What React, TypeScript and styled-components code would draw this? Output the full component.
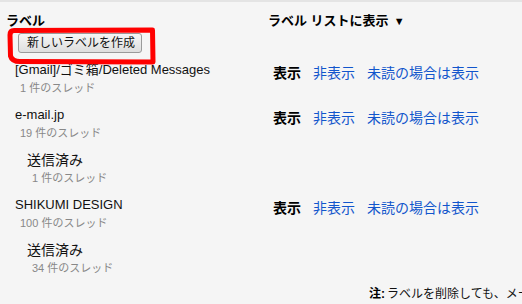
import React from "react";
import styled, { createGlobalStyle } from "styled-components";

const Global = createGlobalStyle`
  html, body { margin: 0; padding: 0; background: #f5f5f5; }
  body { font-family: "Liberation Sans", Arial, "Noto Sans CJK JP", sans-serif; color: #222; }
`;

const Page = styled.div`
  position: relative;
  width: 522px;
  height: 304px;
  overflow: hidden;
  background: #f5f5f5;
  border-top: 2px solid #e4e4e4;
  box-sizing: border-box;
  padding-left: 6px;
`;

const Table = styled.div`
  display: grid;
  grid-template-columns: 262px 1fr;
`;

const HeadCell = styled.div`
  padding-top: 10px;
  font-size: 13px;
  font-weight: bold;
  line-height: 18px;
  color: #000;
  display: flex;
  flex-direction: column;
  align-items: flex-start;
`;

const Caret = styled.span`
  font-size: 11px;
  margin-left: 5px;
`;

const CreateButton = styled.button`
  margin: 3px 0 7px 12px;
  height: 20px;
  padding: 0 8px;
  font-family: "Liberation Sans", Arial, "Noto Sans CJK JP", sans-serif;
  font-size: 12px;
  color: #111;
  line-height: 16px;
  border: 1px solid #9a9a9a;
  border-radius: 3px;
  background: linear-gradient(#f6f6f6, #dedede);
  width: 124px;
  white-space: nowrap;
`;

const LabelCell = styled.div<{ $depth: number }>`
  height: 45px;
  box-sizing: border-box;
  padding-top: 1px;
  padding-left: ${(p) => 9 + p.$depth * 12}px;
`;

const Name = styled.div<{ $sub?: boolean }>`
  font-size: ${(p) => (p.$sub ? 14 : 13)}px;
  line-height: 18px;
  color: #111;
  white-space: nowrap;
`;

const Count = styled.div`
  font-size: 11px;
  line-height: 18px;
  color: #888;
  padding-left: 5px;
`;

const ActionCell = styled.div`
  height: 45px;
  box-sizing: border-box;
  padding-top: 3px;
  padding-left: 5px;
  display: flex;
  gap: 12px;
  font-size: 14px;
  line-height: 18px;
  font-family: "Noto Sans CJK JP", sans-serif;
`;

const Current = styled.span`
  font-weight: bold;
  color: #000;
`;

const Link = styled.span`
  color: #1155cc;
`;

const Footer = styled.div`
  grid-column: 2;
  padding-left: 101px;
  font-size: 12px;
  line-height: 18px;
  white-space: nowrap;
  color: #111;
  b { color: #000; margin-right: 2px; }
`;

const Annotation = styled.svg`
  position: absolute;
  left: 0;
  top: 0;
  pointer-events: none;
`;

type Label = { name: string; count: string; depth: number; actions: boolean };

const labels: Label[] = [
  { name: "[Gmail]/ゴミ箱/Deleted Messages", count: "1 件のスレッド", depth: 0, actions: true },
  { name: "e-mail.jp", count: "19 件のスレッド", depth: 0, actions: true },
  { name: "送信済み", count: "1 件のスレッド", depth: 1, actions: false },
  { name: "SHIKUMI DESIGN", count: "100 件のスレッド", depth: 0, actions: true },
  { name: "送信済み", count: "34 件のスレッド", depth: 1, actions: false },
];

export default function App() {
  return (
    <>
      <Global />
      <Page>
        <Table>
          <HeadCell>
            ラベル
            <CreateButton>新しいラベルを作成</CreateButton>
          </HeadCell>
          <HeadCell>
            <span>
              ラベル リストに表示<Caret>▼</Caret>
            </span>
          </HeadCell>
          {labels.map((l, i) => (
            <React.Fragment key={i}>
              <LabelCell $depth={l.depth}>
                <Name $sub={l.depth > 0}>{l.name}</Name>
                <Count>{l.count}</Count>
              </LabelCell>
              <ActionCell>
                {l.actions && (
                  <>
                    <Current>表示</Current>
                    <Link>非表示</Link>
                    <Link>未読の場合は表示</Link>
                  </>
                )}
              </ActionCell>
            </React.Fragment>
          ))}
          <Footer>
            <b>注:</b>ラベルを削除しても、メールは削除されません。
          </Footer>
        </Table>
        <Annotation width="522" height="304" viewBox="0 0 522 304">
          <path
            d="M14 28.5 Q10 28.5 10 33 L10.5 54 Q12 59.5 20 59.5 L153 60 L152.5 28 L14 28.5 Z"
            fill="none"
            stroke="#ff0000"
            strokeWidth="5"
            strokeLinejoin="round"
          />
        </Annotation>
      </Page>
    </>
  );
}
